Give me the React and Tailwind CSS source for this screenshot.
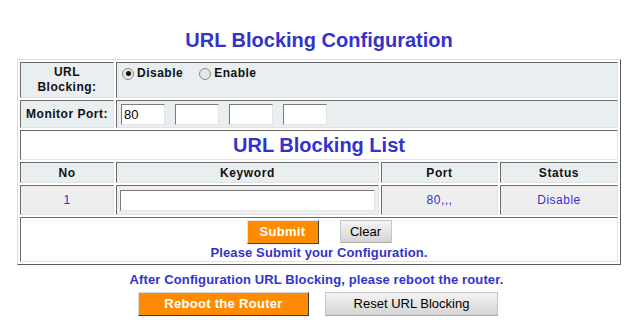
import React from "react";

// 셀 테두리 (안쪽으로 들어간 모양)
const cell =
  "border border-t-[#6b6b6b] border-l-[#6b6b6b] border-b-[#e2e2e2] border-r-[#e2e2e2]";
// 입력란 테두리
const field =
  "h-[21px] bg-white border border-t-[#7b7b7b] border-l-[#7b7b7b] border-b-[#e4e4e4] border-r-[#e4e4e4] px-[2px] text-[13px] text-black outline-none";

function Radio({ checked, label }) {
  return (
    <label className="flex items-center gap-[3px] cursor-pointer">
      <span className="w-[12px] h-[12px] rounded-full border border-[#8a8a8a] bg-[#e6e6e6] flex items-center justify-center">
        {checked && <span className="w-[5px] h-[5px] rounded-full bg-[#111]" />}
      </span>
      <span className="text-[12px] leading-[15px] font-bold tracking-[0.5px] text-[#111]">{label}</span>
    </label>
  );
}

export default function App() {
  return (
    <div className="w-[631px] h-[335px] bg-white font-['Liberation_Sans',Arial,sans-serif]">
      <div className="ml-[17px] w-[604px] pt-[28px]">
        {/* 제목 */}
        <h1 className="text-center text-[20px] leading-[24px] font-bold text-[#3333cc]">
          URL Blocking Configuration
        </h1>

        {/* 설정 표 */}
        <div className="mt-[7px] border border-t-[#dcdcdc] border-l-[#dcdcdc] border-b-[#5a5a5a] border-r-[#5a5a5a] p-[2px] flex flex-col gap-[2px]">
          {/* URL 차단 사용 */}
          <div className="flex gap-[2px] h-[36px]">
            <div className={cell + " w-[94px] bg-[#e9eef1] flex items-center justify-center text-center text-[12px] leading-[15px] font-bold tracking-[0.5px] text-[#111]"}>
              URL
              <br />
              Blocking:
            </div>
            <div className={cell + " flex-1 bg-[#e9eef1] flex items-start gap-[16px] pt-[3px] pl-[5px]"}>
              <Radio checked label="Disable" />
              <Radio label="Enable" />
            </div>
          </div>

          {/* 모니터 포트 */}
          <div className="flex gap-[2px] h-[28px]">
            <div className={cell + " w-[94px] bg-[#e9eef1] flex items-center justify-center text-[12px] font-bold tracking-[0.5px] text-[#111]"}>
              Monitor Port:
            </div>
            <div className={cell + " flex-1 bg-[#e9eef1] flex items-center gap-[10px] pl-[4px]"}>
              <input className={field + " w-[44px]"} defaultValue="80" />
              <input className={field + " w-[44px]"} />
              <input className={field + " w-[44px]"} />
              <input className={field + " w-[44px]"} />
            </div>
          </div>

          {/* 목록 제목 */}
          <div className={cell + " h-[30px] bg-white flex items-center justify-center text-[20px] font-bold text-[#3333cc]"}>
            URL Blocking List
          </div>

          {/* 목록 머리글 */}
          <div className="flex gap-[2px] h-[21px] text-[12px] font-bold tracking-[0.6px] text-[#111]">
            <div className={cell + " w-[94px] bg-[#e9eef1] flex items-center justify-center"}>No</div>
            <div className={cell + " w-[263px] bg-[#e9eef1] flex items-center justify-center"}>Keyword</div>
            <div className={cell + " w-[117px] bg-[#e9eef1] flex items-center justify-center"}>Port</div>
            <div className={cell + " flex-1 bg-[#e9eef1] flex items-center justify-center"}>Status</div>
          </div>

          {/* 목록 항목 */}
          <div className="flex gap-[2px] h-[30px] text-[12px] tracking-[0.5px] text-[#3333cc]">
            <div className={cell + " w-[94px] bg-[#eeeeee] flex items-center justify-center"}>1</div>
            <div className={cell + " w-[263px] bg-[#eeeeee] flex items-center pl-[3px]"}>
              <input className={field + " w-[255px]"} />
            </div>
            <div className={cell + " w-[117px] bg-[#eeeeee] flex items-center justify-center"}>80,,,</div>
            <div className={cell + " flex-1 bg-[#eeeeee] flex items-center justify-center"}>Disable</div>
          </div>

          {/* 제출 */}
          <div className={cell + " h-[45px] bg-white flex flex-col items-center pt-[2px]"}>
            <div className="flex gap-[21px] items-start">
              <button className="w-[72px] h-[24px] bg-[#ff8c00] border border-t-[#e2e2e2] border-l-[#e2e2e2] border-b-[#404040] border-r-[#404040] text-white text-[13px] font-bold tracking-[0.3px]">
                Submit
              </button>
              <button className="w-[52px] h-[23px] bg-gradient-to-b from-[#f4f4f4] to-[#d4d4d4] border border-[#c4c4c4] border-b-[#a8a8a8] text-black text-[13px]">
                Clear
              </button>
            </div>
            <p className="mt-[1px] text-[13px] leading-[16px] font-bold tracking-[0.12px] text-[#3333cc]">
              Please Submit your Configuration.
            </p>
          </div>
        </div>

        {/* 재부팅 안내 */}
        <p className="mt-[7px] pr-[5px] text-center text-[13px] leading-[16px] font-bold tracking-[0.12px] text-[#3333cc]">
          After Configuration URL Blocking, please reboot the router.
        </p>
        <div className="mt-[4px] pr-[2px] flex justify-center gap-[16px]">
          <button className="w-[171px] h-[24px] bg-[#ff8c00] border border-t-[#d8d8d8] border-l-[#d8d8d8] border-b-[#3a3a3a] border-r-[#3a3a3a] text-white text-[13px] font-bold tracking-[0.3px]">
            Reboot the Router
          </button>
          <button className="w-[173px] h-[24px] bg-gradient-to-b from-[#f4f4f4] to-[#d4d4d4] border border-[#c4c4c4] border-b-[#a8a8a8] text-black text-[13px]">
            Reset URL Blocking
          </button>
        </div>
      </div>
    </div>
  );
}
